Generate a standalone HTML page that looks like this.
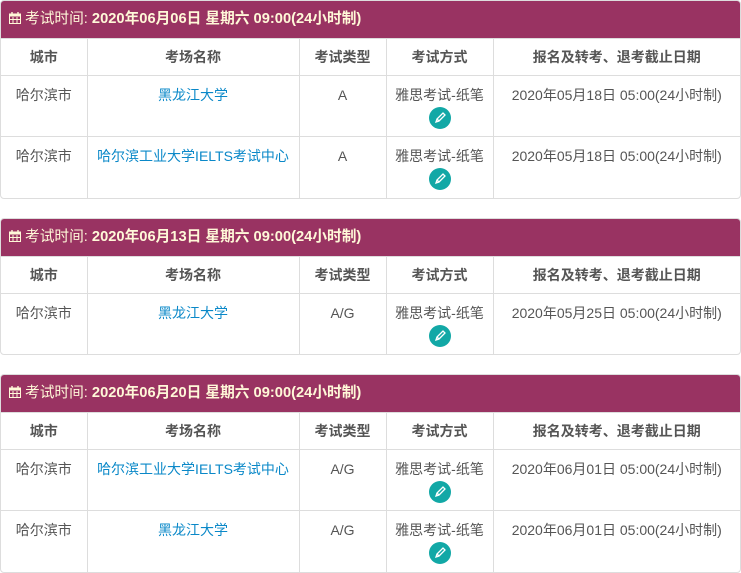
<!DOCTYPE html>
<html><head><meta charset="utf-8"><style>
body{margin:0;background:#fff;font-family:"Liberation Sans","Noto Sans CJK SC",sans-serif;font-size:14px;color:#555;width:741px;height:566px;overflow:hidden}
.blk{border:1px solid #ddd;border-radius:4px;margin-bottom:19px;overflow:hidden;width:739px}
.hd{background:#993362;color:#fff8d8;height:37px;line-height:37px;padding-left:8px;font-size:14.7px;white-space:nowrap}
.hd b{font-weight:bold}
table{border-collapse:collapse;width:100%;table-layout:fixed}
td,th{border-right:1px solid #ddd;border-top:1px solid #ddd;text-align:center;vertical-align:top;padding:0}
td:last-child,th:last-child{border-right:none}
th{height:36px;line-height:36px;font-weight:bold;color:#555}
td{height:61px;padding-top:11px;box-sizing:border-box;line-height:17px}
a{color:#0a88c8;text-decoration:none}
.pen{display:inline-block;width:22px;height:22px;border-radius:50%;background:#12a8a6;margin-top:3px;vertical-align:top;position:relative}
.pen svg{position:absolute;left:5px;top:5px}
.cal{display:inline-block;vertical-align:-1px;margin-right:4px}
</style></head><body>
<div class="blk"><div class="hd"><svg class="cal" width="12" height="12" viewBox="0 0 12 12"><rect x="0.5" y="2" width="11" height="9.5" fill="none" stroke="#fff8d8"/><rect x="0.5" y="2" width="11" height="2.5" fill="#fff8d8"/><path d="M4 5v6M8 5v6M1 7.5h10" stroke="#fff8d8"/><path d="M3 0v3M9 0v3" stroke="#fff8d8" stroke-width="1.4"/></svg>考试时间: <b>2020年06月06日 星期六 09:00(24小时制)</b></div>
<table><colgroup><col style="width:86px"><col style="width:212px"><col style="width:87px"><col style="width:107px"><col></colgroup>
<tr><th>城市</th><th>考场名称</th><th>考试类型</th><th>考试方式</th><th>报名及转考、退考截止日期</th></tr>
<tr><td>哈尔滨市</td><td><a>黑龙江大学</a></td><td>A</td><td>雅思考试-纸笔<br><span class="pen"><svg width="12" height="12" viewBox="0 0 12 12"><path d="M2 10l1-3 6-6 2 2-6 6z M3 7l2 2" fill="none" stroke="#fff" stroke-width="1.3"/></svg></span></td><td>2020年05月18日 05:00(24小时制)</td></tr>
<tr><td>哈尔滨市</td><td><a>哈尔滨工业大学IELTS考试中心</a></td><td>A</td><td>雅思考试-纸笔<br><span class="pen"><svg width="12" height="12" viewBox="0 0 12 12"><path d="M2 10l1-3 6-6 2 2-6 6z M3 7l2 2" fill="none" stroke="#fff" stroke-width="1.3"/></svg></span></td><td>2020年05月18日 05:00(24小时制)</td></tr>
</table></div>
<div class="blk"><div class="hd"><svg class="cal" width="12" height="12" viewBox="0 0 12 12"><rect x="0.5" y="2" width="11" height="9.5" fill="none" stroke="#fff8d8"/><rect x="0.5" y="2" width="11" height="2.5" fill="#fff8d8"/><path d="M4 5v6M8 5v6M1 7.5h10" stroke="#fff8d8"/><path d="M3 0v3M9 0v3" stroke="#fff8d8" stroke-width="1.4"/></svg>考试时间: <b>2020年06月13日 星期六 09:00(24小时制)</b></div>
<table><colgroup><col style="width:86px"><col style="width:212px"><col style="width:87px"><col style="width:107px"><col></colgroup>
<tr><th>城市</th><th>考场名称</th><th>考试类型</th><th>考试方式</th><th>报名及转考、退考截止日期</th></tr>
<tr><td>哈尔滨市</td><td><a>黑龙江大学</a></td><td>A/G</td><td>雅思考试-纸笔<br><span class="pen"><svg width="12" height="12" viewBox="0 0 12 12"><path d="M2 10l1-3 6-6 2 2-6 6z M3 7l2 2" fill="none" stroke="#fff" stroke-width="1.3"/></svg></span></td><td>2020年05月25日 05:00(24小时制)</td></tr>
</table></div>
<div class="blk"><div class="hd"><svg class="cal" width="12" height="12" viewBox="0 0 12 12"><rect x="0.5" y="2" width="11" height="9.5" fill="none" stroke="#fff8d8"/><rect x="0.5" y="2" width="11" height="2.5" fill="#fff8d8"/><path d="M4 5v6M8 5v6M1 7.5h10" stroke="#fff8d8"/><path d="M3 0v3M9 0v3" stroke="#fff8d8" stroke-width="1.4"/></svg>考试时间: <b>2020年06月20日 星期六 09:00(24小时制)</b></div>
<table><colgroup><col style="width:86px"><col style="width:212px"><col style="width:87px"><col style="width:107px"><col></colgroup>
<tr><th>城市</th><th>考场名称</th><th>考试类型</th><th>考试方式</th><th>报名及转考、退考截止日期</th></tr>
<tr><td>哈尔滨市</td><td><a>哈尔滨工业大学IELTS考试中心</a></td><td>A/G</td><td>雅思考试-纸笔<br><span class="pen"><svg width="12" height="12" viewBox="0 0 12 12"><path d="M2 10l1-3 6-6 2 2-6 6z M3 7l2 2" fill="none" stroke="#fff" stroke-width="1.3"/></svg></span></td><td>2020年06月01日 05:00(24小时制)</td></tr>
<tr><td>哈尔滨市</td><td><a>黑龙江大学</a></td><td>A/G</td><td>雅思考试-纸笔<br><span class="pen"><svg width="12" height="12" viewBox="0 0 12 12"><path d="M2 10l1-3 6-6 2 2-6 6z M3 7l2 2" fill="none" stroke="#fff" stroke-width="1.3"/></svg></span></td><td>2020年06月01日 05:00(24小时制)</td></tr>
</table></div>
</body></html>
